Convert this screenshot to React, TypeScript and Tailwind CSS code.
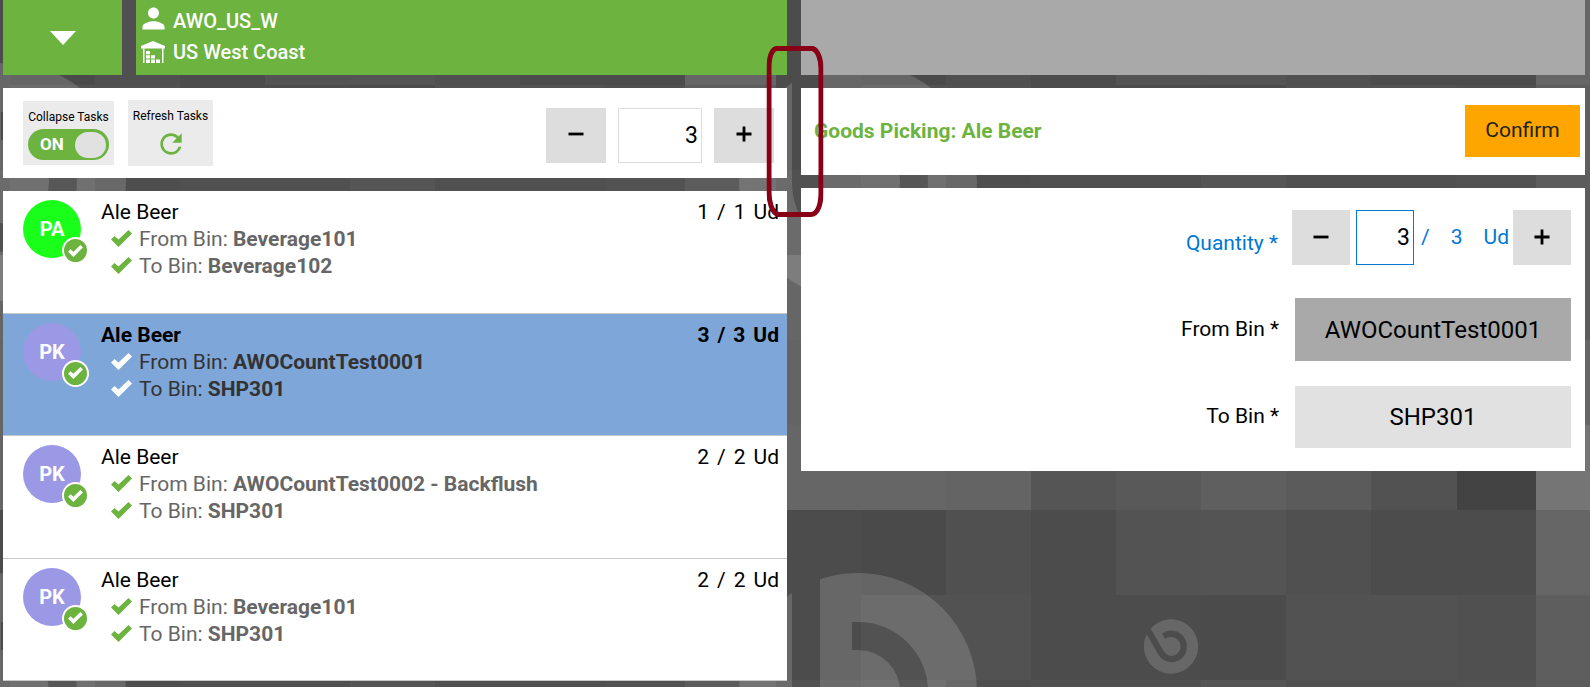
import { useState } from 'react';
import { MdPerson, MdRefresh } from 'react-icons/md';

type Task = {
  code: string;
  item: string;
  done: number;
  total: number;
  fromBin: string;
  toBin: string;
};

const tasks: Task[] = [
  { code: 'PA', item: 'Ale Beer', done: 1, total: 1, fromBin: 'Beverage101', toBin: 'Beverage102' },
  { code: 'PK', item: 'Ale Beer', done: 3, total: 3, fromBin: 'AWOCountTest0001', toBin: 'SHP301' },
  { code: 'PK', item: 'Ale Beer', done: 2, total: 2, fromBin: 'AWOCountTest0002 - Backflush', toBin: 'SHP301' },
  { code: 'PK', item: 'Ale Beer', done: 2, total: 2, fromBin: 'Beverage101', toBin: 'SHP301' },
];

// Wallpaper mosaic: column edges and one grey per cell, row by row
const tileEdges = [0, 91, 176, 261, 346, 431, 516, 601, 686, 772, 851];
const tileRows = [
  ['#666666', '#4c4c4c', '#4a4a4a', '#505050', '#4c4c4c', '#535353', '#545454', '#505050', '#4c4c4c', '#4c4c4c'],
  ['#5e5e5e', '#4c4c4c', '#525252', '#525252', '#4c4c4c', '#4c4c4c', '#4b4b4b', '#525252', '#525252', '#505050'],
  ['#5c5c5c', '#515151', '#575757', '#4e4e4e', '#505050', '#505050', '#555555', '#505050', '#505050', '#525252'],
  ['#5c5c5c', '#666666', '#5a5a5a', '#505050', '#505050', '#555555', '#555555', '#505050', '#505050', '#525252'],
  ['#666666', '#646464', '#5a5a5a', '#505050', '#505050', '#555555', '#555555', '#505050', '#505050', '#525252'],
  ['#757575', '#666666', '#666666', '#646464', '#555555', '#595959', '#5f5f5f', '#5b5b5b', '#525252', '#434343'],
];

const Wallpaper = () => (
  <svg className="absolute inset-0 h-full w-full" aria-hidden="true">
    <defs>
      <mask id="disc" maskUnits="userSpaceOnUse" x="-130" y="-130" width="260" height="260">
        <circle r="119" fill="white" />
        <path d="M-52 -130V0A52 56 0 0 0 0 56A56 56 0 0 0 0 -56H-6" fill="none" stroke="black" strokeWidth="28" />
      </mask>
      <pattern id="mosaic" x="685" y="0" width="851" height="510" patternUnits="userSpaceOnUse">
        {tileRows.map((row, r) =>
          row.map((fill, c) => (
            <rect
              key={`${r}-${c}`}
              x={tileEdges[c]}
              y={r * 85}
              width={tileEdges[c + 1] - tileEdges[c]}
              height={85}
              fill={fill}
            />
          ))
        )}
        <g transform="translate(173 182)">
          <rect x="-130" y="-130" width="260" height="260" fill="white" fillOpacity="0.15" mask="url(#disc)" />
        </g>
        <g transform="translate(486 136.5) rotate(-30) scale(0.228)">
          <rect x="-130" y="-130" width="260" height="260" fill="white" fillOpacity="0.15" mask="url(#disc)" />
        </g>
      </pattern>
    </defs>
    <rect width="100%" height="100%" fill="url(#mosaic)" />
  </svg>
);

const WarehouseIcon = () => (
  <svg viewBox="0 0 24 23" className="h-[23px] w-6" fill="currentColor" aria-hidden="true">
    <path d="M12 0L24 5V7.500H0V5Z" />
    <path d="M2 7h1.500v15H2zM21 7h1.500v15H21z" />
    <path d="M5 10h4v3.200H5zM5 14.200h4v3.300H5zM10 14.200h4v3.300h-4zM5 18.500h4V22H5zM10 18.500h4V22h-4zM15 18.500h4V22h-4z" />
  </svg>
);

const Check = ({ className }: { className: string }) => (
  <svg viewBox="0 0 21 17" className={className} fill="currentColor" aria-hidden="true">
    <path d="M0 9.500L3.500 6L7.500 9.500L17.500 0L21 3.500L7.500 17Z" />
  </svg>
);

const StepIcon = ({ plus }: { plus?: boolean }) => (
  <svg viewBox="0 0 16 16" className="mb-[2px] h-4 w-4" aria-hidden="true">
    <path d={plus ? 'M0.500 8H15.500M8 0.500V15.500' : 'M0.500 8H15.500'} stroke="black" strokeWidth="2.800" />
  </svg>
);

const TaskRow = ({ task, selected, onSelect }: { task: Task; selected: boolean; onSelect: () => void }) => (
  <li
    onClick={onSelect}
    className={`flex border-b border-[#c8c8c8] pl-5 pr-2 pt-2 ${selected ? 'bg-[#7ea6d9]' : 'bg-white'}`}
  >
    <div className="relative mt-px h-[58px] w-[58px] shrink-0">
      <div
        className={`flex h-full w-full items-center justify-center rounded-full text-[20px] font-bold text-white ${
          task.code === 'PA' ? 'bg-[#1aff1a]' : 'bg-[#9b99e5]'
        }`}
      >
        {task.code}
      </div>
      <div className="absolute -bottom-[6px] -right-2 flex h-[27px] w-[27px] items-center justify-center rounded-full border-2 border-white bg-[#6db33f] text-white">
        <Check className="h-3 w-[15px]" />
      </div>
    </div>
    <div className={`ml-5 grow leading-[27px] ${selected ? 'text-[#333333]' : 'text-[#666666]'}`}>
      <div className={`flex justify-between text-black ${selected ? 'font-bold' : ''}`}>
        <span>{task.item}</span>
        <span className="flex gap-2">
          <span>{task.done}</span>
          <span>/</span>
          <span>{task.total}</span>
          <span>Ud</span>
        </span>
      </div>
      {[
        ['From Bin:', task.fromBin],
        ['To Bin:', task.toBin],
      ].map(([label, bin]) => (
        <div key={label} className="flex items-center pl-[10px]">
          <Check className={`mb-[2px] mr-[7px] h-[17px] w-[21px] ${selected ? 'text-white' : 'text-[#6db33f]'}`} />
          <span>
            {label} <b>{bin}</b>
          </span>
        </div>
      ))}
    </div>
  </li>
);

export default function App() {
  const [collapsed, setCollapsed] = useState(true);
  const [count, setCount] = useState(3);
  const [quantity, setQuantity] = useState(3);
  const [selected, setSelected] = useState(1);

  return (
    <div className="relative min-h-screen font-['Roboto',sans-serif] text-[21px] text-black">
      <Wallpaper />

      <div className="relative grid grid-cols-2 items-start gap-[14px] pl-[3px] pr-[5px]">
        <section className="flex flex-col gap-[13px]">
          <header className="flex h-[75px] gap-[14px] text-white">
            <button aria-label="Menu" className="flex w-[119px] items-center justify-center bg-[#6db33f]">
              <svg viewBox="0 0 26 14" className="h-[14px] w-[26px]" fill="currentColor" aria-hidden="true">
                <path d="M0 0H26L13 14Z" />
              </svg>
            </button>
            <div className="flex grow flex-col bg-[#6db33f] pl-[5px] pt-[6px] text-[20px] font-medium leading-[31px]">
              <div className="flex items-center gap-2">
                <span className="-mt-[6px] flex w-6 justify-center">
                  <MdPerson className="h-[33px] w-[33px] shrink-0" />
                </span>
                AWO_US_W
              </div>
              <div className="flex items-center gap-2">
                <WarehouseIcon />
                US West Coast
              </div>
            </div>
          </header>

          <div className="flex h-[90px] items-center justify-between bg-white pl-5 pr-[13px]">
            <div className="flex items-center gap-[14px] text-[12px]">
              <label className="flex h-16 w-[91px] cursor-pointer flex-col items-center bg-[#ebebeb] pt-2">
                <span className="leading-4">Collapse Tasks</span>
                <input
                  type="checkbox"
                  className="sr-only"
                  checked={collapsed}
                  onChange={(e) => setCollapsed(e.target.checked)}
                />
                <span className="mt-1 flex h-[31px] w-[81px] items-center justify-between rounded-full bg-[#6db33f] pl-3 pr-[3px]">
                  <span className="text-[17px] font-bold text-white">{collapsed ? 'ON' : 'OFF'}</span>
                  <span className="h-[26px] w-[31px] rounded-full bg-[#e1e1e1]" />
                </span>
              </label>
              <button className="flex h-[66px] w-[85px] flex-col items-center bg-[#ebebeb] pt-2">
                <span className="leading-4">Refresh Tasks</span>
                <MdRefresh className="mt-1 h-8 w-8 text-[#6db33f]" />
              </button>
            </div>
            <div className="flex gap-3 pt-1">
              <button
                aria-label="Decrease count"
                onClick={() => setCount(count - 1)}
                className="flex h-[55px] w-[60px] items-center justify-center bg-[#dddddd]"
              >
                <StepIcon />
              </button>
              <input
                aria-label="Count"
                value={count}
                onChange={(e) => setCount(Number(e.target.value))}
                className="h-[55px] w-[84px] border border-[#dddddd] bg-white pr-[3px] text-right text-[23px]"
              />
              <button
                aria-label="Increase count"
                onClick={() => setCount(count + 1)}
                className="flex h-[55px] w-[60px] items-center justify-center bg-[#dddddd]"
              >
                <StepIcon plus />
              </button>
            </div>
          </div>

          <ul className="grid min-h-[490px] auto-rows-fr">
            {tasks.map((task, i) => (
              <TaskRow key={i} task={task} selected={i === selected} onSelect={() => setSelected(i)} />
            ))}
          </ul>
        </section>

        <section className="flex flex-col gap-[13px]">
          <div className="h-[75px] bg-[#a9a9a9]" />

          <div className="flex h-[87px] items-center justify-between bg-white pl-[13px] pr-[5px]">
            <h1 className="text-[21px] font-bold text-[#6db33f]">Goods Picking: Ale Beer</h1>
            <button className="mb-[2px] h-[52px] w-[115px] bg-[#ffa500] text-[#222222]">Confirm</button>
          </div>

          <form
            className="flex flex-col bg-white pb-[23px] pl-5 pr-[14px] pt-[22px]"
            onSubmit={(e) => e.preventDefault()}
          >
            <div className="flex items-center justify-end text-[#0078d4]">
              <label htmlFor="quantity" className="mr-[14px] pt-3">
                Quantity *
              </label>
              <button
                type="button"
                aria-label="Decrease quantity"
                onClick={() => setQuantity(quantity - 1)}
                className="flex h-[55px] w-[58px] items-center justify-center bg-[#dddddd]"
              >
                <StepIcon />
              </button>
              <input
                id="quantity"
                value={quantity}
                onChange={(e) => setQuantity(Number(e.target.value))}
                className="ml-[6px] h-[55px] w-[58px] border border-[#0078d4] bg-white pr-[3px] text-right text-[23px] text-black"
              />
              <span className="flex w-[99px] justify-between pl-[7px] pr-1">
                <span>/</span>
                <span>3</span>
                <span>Ud</span>
              </span>
              <button
                type="button"
                aria-label="Increase quantity"
                onClick={() => setQuantity(quantity + 1)}
                className="flex h-[55px] w-[58px] items-center justify-center bg-[#dddddd]"
              >
                <StepIcon plus />
              </button>
            </div>
            <div className="mt-[33px] flex items-center justify-end">
              <label htmlFor="from-bin">From Bin *</label>
              <button id="from-bin" type="button" className="ml-4 h-[63px] w-[276px] bg-[#a9a9a9] text-[24px]">
                AWOCountTest0001
              </button>
            </div>
            <div className="mt-[25px] flex items-center justify-end">
              <label htmlFor="to-bin">To Bin *</label>
              <button id="to-bin" type="button" className="ml-4 h-[62px] w-[276px] bg-[#e1e1e1] text-[24px]">
                SHP301
              </button>
            </div>
          </form>
        </section>
      </div>

      {/* Highlight around the gutter between both panels */}
      <svg
        viewBox="0 0 57 171"
        className="pointer-events-none absolute left-1/2 top-[46px] h-[171px] w-[57px] -translate-x-1/2"
        fill="none"
        aria-hidden="true"
      >
        <path
          d="M10 2.500H46C51 4 54.500 12 54.500 23V146C54.500 157 52 168.500 44 168.500H12C5 167 2.500 155 2.500 146V23C2.500 12 4 4 10 2.500Z"
          stroke="#880015"
          strokeWidth="5"
        />
      </svg>
    </div>
  );
}
